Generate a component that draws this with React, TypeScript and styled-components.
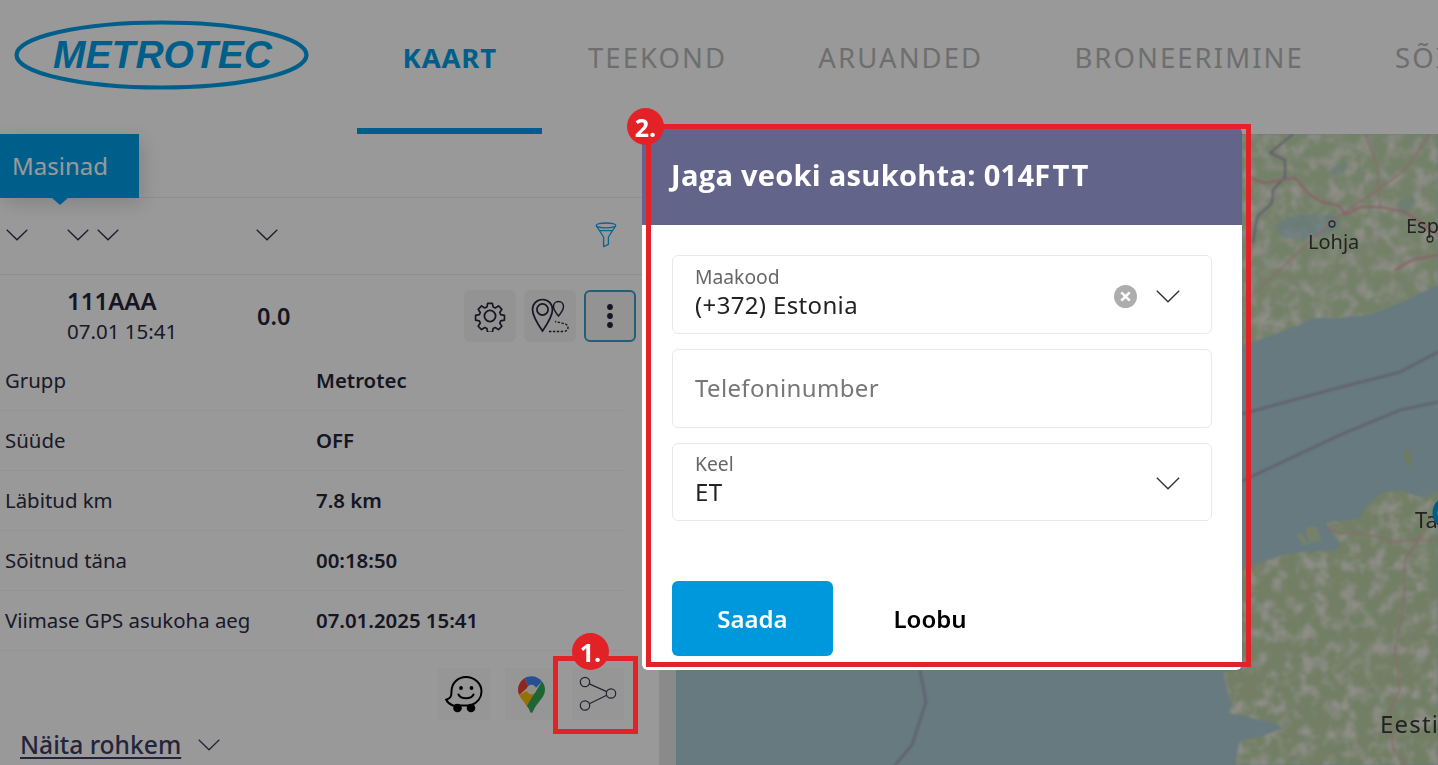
import React from "react";
import styled, { createGlobalStyle } from "styled-components";

const Global = createGlobalStyle`
  html, body { margin: 0; padding: 0; background: #fff; }
  * { box-sizing: border-box; }
  body { font-family: "Noto Sans", "Open Sans", sans-serif; color: #2c2c44; }
`;

const Page = styled.div`
  position: relative;
  width: 1438px;
  height: 765px;
  overflow: hidden;
  display: flex;
  flex-direction: column;
  background: #fff;
`;

const Header = styled.header`
  height: 134px;
  flex: none;
  display: flex;
  align-items: flex-start;
  overflow: hidden;
`;

const LogoWrap = styled.div`
  width: 357px;
  flex: none;
  padding: 19px 0 0 13px;
`;

const Nav = styled.nav`
  display: flex;
  white-space: nowrap;
`;

const NavItem = styled.a<{ $active?: boolean }>`
  height: 134px;
  flex: none;
  display: flex;
  align-items: center;
  justify-content: center;
  padding: 0 45.6px 13px;
  font-size: 27.5px;
  font-weight: ${(p) => (p.$active ? 700 : 400)};
  letter-spacing: ${(p) => (p.$active ? "0.8px" : "2.05px")};
  color: ${(p) => (p.$active ? "#009fe6" : "#b8b8b8")};
  border-bottom: 6px solid ${(p) => (p.$active ? "#009fe6" : "transparent")};
`;

const Body = styled.div`
  flex: 1;
  display: flex;
  min-height: 0;
`;

const Sidebar = styled.aside`
  width: 659px;
  flex: none;
  display: flex;
  flex-direction: column;
  background: #fff;
`;

const ScrollTrack = styled.div`
  width: 17px;
  flex: none;
  background: #e6e6e6;
`;

const MapArea = styled.main`
  flex: 1;
  min-width: 0;
  overflow: hidden;
  svg { display: block; }
`;

const TabStrip = styled.div`
  height: 64px;
  flex: none;
  display: flex;
  border-bottom: 1px solid #ededed;
`;

const Tab = styled.div`
  position: relative;
  width: 139px;
  height: 64px;
  padding: 0 0 2px 12px;
  display: flex;
  align-items: center;
  background: #009fe6;
  color: #fff;
  font-size: 24px;
  box-shadow: 4px 6px 18px rgba(0, 0, 0, 0.14);
  &::after {
    content: "";
    position: absolute;
    left: 52px;
    bottom: -7px;
    border-left: 8px solid transparent;
    border-right: 8px solid transparent;
    border-top: 7px solid #009fe6;
  }
`;

const FilterRow = styled.div`
  height: 77px;
  flex: none;
  display: grid;
  grid-template-columns: 61px 30px 159px 1fr auto;
  align-items: center;
  padding: 0 42px 2px 6px;
  border-bottom: 1px solid #ededed;
`;

const Vehicle = styled.div`
  height: 76px;
  flex: none;
  display: grid;
  grid-template-columns: 190px 207px 52px 8px 52px 8px 52px;
  align-items: center;
  padding: 6px 0 0 67px;
`;

const VehicleInfo = styled.div`
  display: flex;
  flex-direction: column;
`;

const Plate = styled.span`
  font-size: 24px;
  line-height: 30px;
  font-weight: 600;
  color: #25253a;
`;

const Stamp = styled.span`
  font-size: 20.5px;
  line-height: 30px;
  color: #2c2c44;
`;

const Speed = styled.span`
  font-size: 23.5px;
  font-weight: 600;
  color: #25253a;
`;

const IconBtn = styled.button<{ $outlined?: boolean }>`
  width: 52px;
  height: 52px;
  padding: 0;
  display: flex;
  align-items: center;
  justify-content: center;
  background: #f5f5f5;
  border: ${(p) => (p.$outlined ? "2px solid #3b9cc8" : "none")};
  border-radius: 6px;
  color: #25253a;
`;

const InfoRow = styled.div`
  height: 60px;
  flex: none;
  display: grid;
  grid-template-columns: 311px 1fr;
  align-items: center;
  padding: 0 0 2px 5px;
  margin-right: 34px;
  font-size: 20.4px;
  border-bottom: 1px solid #f5f5f5;
  color: #2c2c44;
`;

const InfoValue = styled.span`
  font-weight: 600;
  color: #25253a;
`;

const ActionRow = styled.div`
  display: flex;
  justify-content: flex-end;
  gap: 15px;
  padding: 17px 35px 0 0;
`;

const ActionBtn = styled.div`
  width: 52px;
  height: 52px;
  display: flex;
  align-items: center;
  justify-content: center;
  background: #fafafa;
`;

const MoreRow = styled.div`
  display: flex;
  align-items: center;
  gap: 17px;
  padding: 8px 0 0 20px;
  font-size: 24.6px;
  line-height: 34px;
  font-weight: 500;
  color: #3c3c64;
`;

const MoreLink = styled.a`
  text-decoration: underline;
  text-underline-offset: 3px;
`;

const Overlay = styled.div`
  position: absolute;
  inset: 0;
  z-index: 5;
  background: rgba(0, 0, 0, 0.4);
`;

const Modal = styled.section`
  position: absolute;
  z-index: 6;
  left: 642px;
  top: 126px;
  width: 600px;
  height: 544px;
  display: flex;
  flex-direction: column;
  background: #fff;
  border-radius: 6px;
  overflow: hidden;
`;

const ModalHeader = styled.div`
  height: 99px;
  flex: none;
  display: flex;
  align-items: center;
  padding: 0 0 1px 29px;
  background: #636489;
  color: #fff;
  font-family: "Open Sans", "Noto Sans", sans-serif;
  font-size: 29.1px;
  font-weight: 700;
  letter-spacing: 0.25px;
  white-space: pre;
`;

const SpacedLetters = styled.span`
  letter-spacing: 2.2px;
`;

const Form = styled.div`
  display: flex;
  flex-direction: column;
  gap: 15px;
  padding: 30px 30px 0;
`;

const Field = styled.div<{ $h: number }>`
  height: ${(p) => p.$h}px;
  display: flex;
  align-items: center;
  padding: 0 31px 0 22px;
  border: 1px solid #e9e9e9;
  border-radius: 6px;
`;

const FieldText = styled.div`
  flex: 1;
  display: flex;
  flex-direction: column;
  padding-bottom: 2px;
`;

const FieldLabel = styled.span`
  font-size: 19.3px;
  line-height: 22px;
  color: #666;
`;

const FieldValue = styled.span`
  font-size: 24px;
  line-height: 34px;
  letter-spacing: 0.35px;
  color: #222;
`;

const Placeholder = styled.span`
  font-size: 24px;
  letter-spacing: 0.35px;
  color: #777;
  padding-bottom: 2px;
`;

const FieldIcons = styled.div`
  display: flex;
  align-items: center;
  gap: 19px;
  margin-top: 3px;
`;

const Footer = styled.div`
  margin-top: auto;
  display: flex;
  align-items: center;
  padding: 0 30px 14px;
`;

const PrimaryButton = styled.button`
  width: 161px;
  height: 75px;
  border: none;
  border-radius: 6px;
  background: #0098dc;
  color: #fff;
  font-family: inherit;
  font-size: 24px;
  font-weight: 600;
`;

const GhostButton = styled.button`
  width: 194px;
  height: 75px;
  padding-top: 1px;
  border: none;
  background: none;
  color: #000;
  font-family: inherit;
  font-size: 24px;
  font-weight: 600;
`;

const Callout = styled.div<{ $x: number; $y: number; $w: number; $h: number }>`
  position: absolute;
  z-index: 7;
  left: ${(p) => p.$x}px;
  top: ${(p) => p.$y}px;
  width: ${(p) => p.$w}px;
  height: ${(p) => p.$h}px;
  border: 5px solid #e22226;
`;

const CalloutBadge = styled.div<{ $x: number; $y: number }>`
  position: absolute;
  z-index: 8;
  left: ${(p) => p.$x}px;
  top: ${(p) => p.$y}px;
  width: 37px;
  height: 37px;
  display: flex;
  align-items: center;
  justify-content: center;
  border-radius: 50%;
  background: #e22226;
  color: #fff;
  font-family: "Open Sans", sans-serif;
  font-size: 25px;
  font-weight: 700;
`;

const Chevron = ({ w = 22, color = "#2c2c44" }: { w?: number; color?: string }) => (
  <svg width={w} height={w / 2 + 1} viewBox="0 0 22 12" fill="none">
    <path d="M0.7 0.8 11 10.8 21.3 0.8" stroke={color} strokeWidth="1.3" />
  </svg>
);

const Logo = () => (
  <svg width="298" height="72" viewBox="0 0 298 72" fill="none">
    <ellipse cx="148.5" cy="36" rx="145" ry="32.5" stroke="#009fe6" strokeWidth="4.2" />
    <text
      x="40"
      y="49"
      textLength="219"
      lengthAdjust="spacingAndGlyphs"
      fontFamily="'Liberation Sans', sans-serif"
      fontSize="38"
      fontWeight="700"
      fontStyle="italic"
      fill="#009fe6"
    >
      METROTEC
    </text>
  </svg>
);

const Funnel = () => (
  <svg width="22" height="26" viewBox="0 0 22 26" fill="none" stroke="#1aa5e6" strokeWidth="1.3">
    <ellipse cx="11" cy="3.4" rx="9.8" ry="2.4" />
    <path d="M1.2 3.6 8.6 15V24.6L13.4 22.4V15L20.8 3.6" strokeLinejoin="round" />
    <path d="M5 8.6h12" />
  </svg>
);

const Gear = () => (
  <svg width="32" height="32" viewBox="0 0 32 32" fill="none" stroke="#25253a" strokeWidth="1.8" strokeLinejoin="round">
    <path d="M13.4 2.2h5.2l.8 4.1 2.3 1 3.5-2.3 3.7 3.7-2.3 3.5 1 2.3 4.1.8v5.2l-4.1.8-1 2.3 2.3 3.5-3.7 3.7-3.5-2.3-2.3 1-.8 4.1h-5.2l-.8-4.1-2.3-1-3.5 2.3-3.7-3.7 2.3-3.5-1-2.3-4.1-.8v-5.2l4.1-.8 1-2.3-2.3-3.5 3.7-3.7 3.5 2.3 2.3-1z" transform="translate(1.3 1.3) scale(.92)" />
    <circle cx="16" cy="16" r="5.6" />
  </svg>
);

const RoutePin = () => (
  <svg width="38" height="36" viewBox="0 0 38 36" fill="none" stroke="#25253a" strokeWidth="1.7">
    <path d="M11.5 1.5C5.8 1.5 1.5 6 1.5 11.5 1.5 18.5 11.500 33 11.500 33S21.500 18.500 21.500 11.500C21.500 6 17.200 1.500 11.500 1.500Z" />
    <circle cx="11.500" cy="11.500" r="5.600" />
    <path d="M27.500 3.500c-3 0-5 2.300-5 5 0 3.500 5 9.500 5 9.500s5-6 5-9.500c0-2.700-2-5-5-5Z" strokeWidth="1.400" />
    <path d="M18 33.500h14c3.500 0 5-1.800 5-3.800 0-3-3-4.200-6-4.600l-7-1.600" strokeWidth="1.400" strokeDasharray="2.400 1.500" />
  </svg>
);

const Kebab = () => (
  <svg width="8" height="26" viewBox="0 0 8 26" fill="#25253a">
    <circle cx="4" cy="4" r="2.9" />
    <circle cx="4" cy="13" r="2.9" />
    <circle cx="4" cy="22" r="2.9" />
  </svg>
);

const Waze = () => (
  <svg width="38" height="38" viewBox="0 0 38 38" fill="none" stroke="#000">
    <path d="M21 2C12.500 2 6.500 8.500 6.500 16.500c0 5-1 7-5.300 8.300 1.500 3 4 4.700 6.500 5.700h17.800C32.500 28 36.500 22.500 36.500 16.500 36.500 8.500 29.500 2 21 2Z" strokeWidth="2" />
    <circle cx="16" cy="13" r="1.900" fill="#000" stroke="none" />
    <circle cx="26.500" cy="13" r="1.900" fill="#000" stroke="none" />
    <path d="M13.500 19.500c2.500 5 12.500 5 15 0" strokeWidth="2" strokeLinecap="round" />
    <circle cx="12.500" cy="33" r="4.300" fill="#000" stroke="none" />
    <circle cx="26" cy="33" r="4.300" fill="#000" stroke="none" />
  </svg>
);

const MapsPin = () => (
  <svg width="27" height="37" viewBox="0 0 28 38">
    <path d="M7 2C3 4.500 0 9 0 14c0 2 .5 3.800 1.300 5.500L11 11z" fill="#ea4335" />
    <path d="M7 2C9 .7 11.500 0 14 0c4.500 0 8.300 2.100 10.800 5.500L17 14 11 11z" fill="#4285f4" />
    <path d="M1.300 19.500C3 23.500 6.500 26.500 9 31l9-13-3-6z" fill="#fbbc04" />
    <path d="M24.800 5.500C26.900 7.900 28 10.700 28 14c0 8-8 12.500-12 21.500-.7 1.800-1.200 2.500-2 2.500s-1.500-1-2-2.500c-.6-1.600-1.500-3-3-4.500z" fill="#34a853" />
    <circle cx="14" cy="14" r="5" fill="#f1efe6" />
  </svg>
);

const Share = () => (
  <svg width="38" height="36" viewBox="0 0 38 36" fill="none" stroke="#3a3a50" strokeWidth="1.200">
    <circle cx="6" cy="6" r="4.700" />
    <circle cx="32" cy="17.500" r="4.700" />
    <circle cx="6" cy="29.500" r="4.700" />
    <path d="M10.300 7.900 27.700 15.600M10.300 27.700 27.700 19.300" />
  </svg>
);

const ClearIcon = () => (
  <svg width="23" height="23" viewBox="0 0 23 23">
    <circle cx="11.500" cy="11.500" r="11.500" fill="#adadad" />
    <path d="M7.300 7.300 15.700 15.700M15.700 7.300 7.300 15.700" stroke="#fff" strokeWidth="2.600" />
  </svg>
);

const LAND_N =
  "M1242 134H1438V285C1425 290 1410 300 1395 305C1380 310 1370 318 1350 316C1335 322 1315 312 1300 325C1280 332 1260 340 1242 346Z";
const LAND_S =
  "M1242 568C1255 565 1265 560 1277 557C1290 552 1305 553 1327 550C1335 551 1340 549 1340 544C1335 535 1328 528 1327 523C1334 520 1340 522 1345 520C1355 522 1362 518 1362 512C1368 505 1375 497 1382 493C1390 490 1395 492 1402 490C1410 494 1418 498 1427 497L1438 490V765H1236C1236 755 1238 748 1240 741C1250 738 1262 736 1283 728C1265 720 1245 716 1228 713C1232 708 1232 703 1230 700C1226 690 1226 680 1223 673C1230 671 1236 671 1242 670Z";

const MapDrawing = () => (
  <svg width="762" height="631" viewBox="676 134 762 631">
    <defs>
      <filter id="mottle" x="0" y="0" width="100%" height="100%">
        <feTurbulence type="fractalNoise" baseFrequency="0.07" numOctaves="4" seed="7" result="n" />
        <feColorMatrix
          in="n"
          type="matrix"
          values="0 0 0 0 0.85  0 0 0 0 0.84  0 0 0 0 0.76  0 0 0 3 -1.35"
          result="light"
        />
        <feComposite in="light" in2="SourceAlpha" operator="in" result="clipped" />
        <feMerge>
          <feMergeNode in="SourceGraphic" />
          <feMergeNode in="clipped" />
        </feMerge>
      </filter>
      <filter id="blur1">
        <feGaussianBlur stdDeviation="0.8" />
      </filter>
    </defs>
    <rect x="676" y="134" width="762" height="631" fill="#abcbd6" />
    <g filter="url(#blur1)">
      <path d={LAND_N} fill="#c2d8b0" filter="url(#mottle)" />
      <path d={LAND_S} fill="#bed4a8" filter="url(#mottle)" />
      <path d="M1280 222C1292 214 1310 212 1320 216C1335 212 1345 220 1338 228C1325 236 1300 242 1284 238C1276 232 1274 228 1280 222Z" fill="#a6cad6" opacity=".6" />
      <path d="M1395 205 1412 195 1416 205 1402 216Z M1330 170 1345 160 1348 168 1335 178Z" fill="#a6cad6" opacity=".4" />
      <path d="M1240 722C1255 718 1270 720 1283 728 1270 734 1255 738 1240 741Z" fill="#abcbd6" />
      <path d="M1305 528 1317 526 1321 541 1309 543Z M1296 533 1303 534 1309 546 1302 544Z M1327 521 1340 524 1345 535 1333 535Z" fill="#c4d8b0" />
      <path d="M1405 447 1412 457 1411 467 1404 460Z" fill="#b6cf9c" />

      <g fill="none" stroke="#a09ab6" strokeWidth="2.2">
        <path d="M1293 134 1270 153 1285 160 1285 177 1273 190 1272 203 1257 217 1253 243" />
        <path d="M1242 414 1330 390 1400 372 1438 352" />
        <path d="M1242 481 1340 435 1400 410 1438 402" />
        <path d="M920 670 926 702 912 745 895 765" />
      </g>
      <g fill="none" stroke="#e2b4b4" strokeWidth="1.600">
        <path d="M1365 134 1377 165 1379 190 1380 207" />
        <path d="M1430 134 1405 170 1378 190 1340 215 1290 260 1253 295" />
        <path d="M1327 528 1340 533 1362 533 1395 542 1415 540 1438 540" />
        <path d="M1425 530 1405 560 1404 600 1395 650 1400 690 1390 710 1393 750 1405 765" />
      </g>
      <g fill="none" stroke="#e4a0ac" strokeWidth="2.200">
        <path d="M1251 178 1265 183 1282 180 1295 178 1310 195 1322 202 1340 206 1345 215 1360 207 1380 207 1405 212 1425 225 1438 235" />
        <path d="M1395 270 1412 260 1438 255" />
      </g>
    </g>
    <circle cx="1332" cy="224" r="3" fill="none" stroke="#444" strokeWidth="1.300" />
    <circle cx="1430" cy="239" r="3" fill="none" stroke="#444" strokeWidth="1.300" />
    <g fontFamily="'Noto Sans', sans-serif" fill="#3a3a3a">
      <text x="1308" y="249" fontSize="20">Lohja</text>
      <text x="1406" y="233" fontSize="20">Espoo</text>
      <text x="1415" y="528" fontSize="22">Tallinn</text>
      <text x="1380" y="733" fontSize="24" letterSpacing="1.2">Eesti</text>
    </g>
    <circle cx="1450" cy="513" r="15" fill="none" stroke="#009fe6" strokeWidth="5" />
  </svg>
);

const rows: [string, string][] = [
  ["Grupp", "Metrotec"],
  ["Süüde", "OFF"],
  ["Läbitud km", "7.8 km"],
  ["Sõitnud täna", "00:18:50"],
  ["Viimase GPS asukoha aeg", "07.01.2025 15:41"],
];

export default function App() {
  return (
    <Page>
      <Global />
      <Header>
        <LogoWrap>
          <Logo />
        </LogoWrap>
        <Nav>
          <NavItem $active>KAART</NavItem>
          <NavItem>TEEKOND</NavItem>
          <NavItem>ARUANDED</NavItem>
          <NavItem>BRONEERIMINE</NavItem>
          <NavItem>SÕIDUD</NavItem>
        </Nav>
      </Header>
      <Body>
        <Sidebar>
          <TabStrip>
            <Tab>Masinad</Tab>
          </TabStrip>
          <FilterRow>
            <Chevron />
            <Chevron />
            <Chevron />
            <Chevron />
            <Funnel />
          </FilterRow>
          <Vehicle>
            <VehicleInfo>
              <Plate>111AAA</Plate>
              <Stamp>07.01 15:41</Stamp>
            </VehicleInfo>
            <Speed>0.0</Speed>
            <IconBtn>
              <Gear />
            </IconBtn>
            <span />
            <IconBtn>
              <RoutePin />
            </IconBtn>
            <span />
            <IconBtn $outlined>
              <Kebab />
            </IconBtn>
          </Vehicle>
          {rows.map(([label, value]) => (
            <InfoRow key={label}>
              <span>{label}</span>
              <InfoValue>{value}</InfoValue>
            </InfoRow>
          ))}
          <ActionRow>
            <ActionBtn>
              <Waze />
            </ActionBtn>
            <ActionBtn>
              <MapsPin />
            </ActionBtn>
            <ActionBtn>
              <Share />
            </ActionBtn>
          </ActionRow>
          <MoreRow>
            <MoreLink>Näita rohkem</MoreLink>
            <Chevron color="#3c3c64" />
          </MoreRow>
        </Sidebar>
        <ScrollTrack />
        <MapArea>
          <MapDrawing />
        </MapArea>
      </Body>

      <Overlay />

      <Modal>
        <ModalHeader>
          Jaga veoki asukohta: 014<SpacedLetters>FTT</SpacedLetters>
        </ModalHeader>
        <Form>
          <Field $h={79}>
            <FieldText>
              <FieldLabel>Maakood</FieldLabel>
              <FieldValue>(+372) Estonia</FieldValue>
            </FieldText>
            <FieldIcons>
              <ClearIcon />
              <Chevron w={24} color="#333" />
            </FieldIcons>
          </Field>
          <Field $h={79}>
            <Placeholder>Telefoninumber</Placeholder>
          </Field>
          <Field $h={78}>
            <FieldText>
              <FieldLabel>Keel</FieldLabel>
              <FieldValue>ET</FieldValue>
            </FieldText>
            <FieldIcons>
              <Chevron w={24} color="#333" />
            </FieldIcons>
          </Field>
        </Form>
        <Footer>
          <PrimaryButton>Saada</PrimaryButton>
          <GhostButton>Loobu</GhostButton>
        </Footer>
      </Modal>

      <Callout $x={646} $y={124} $w={605} $h={543} />
      <CalloutBadge $x={627} $y={108}>2.</CalloutBadge>
      <Callout $x={553} $y={656} $w={85} $h={78} />
      <CalloutBadge $x={572} $y={633}>1.</CalloutBadge>
    </Page>
  );
}
